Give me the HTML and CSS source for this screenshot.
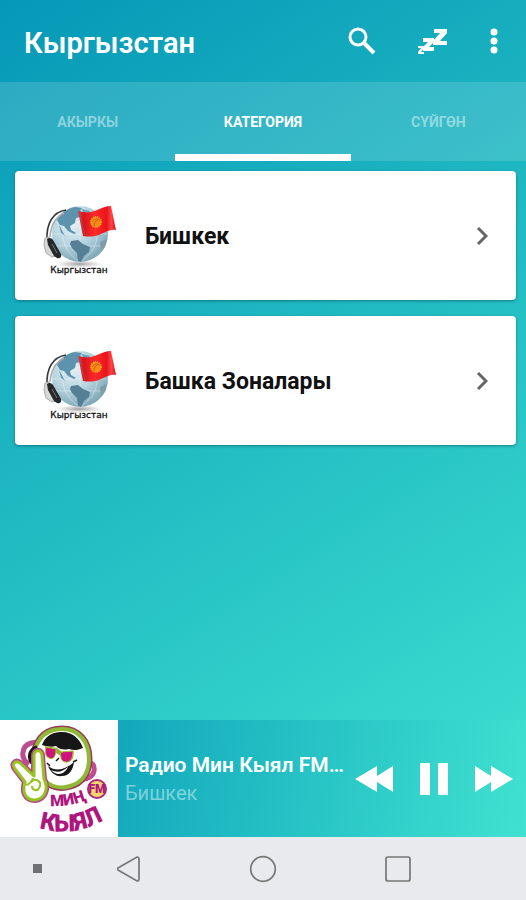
FILE: index.html
```html
<!DOCTYPE html>
<html lang="ky">
<head>
    <meta charset="UTF-8">
    <meta name="viewport" content="width=device-width, initial-scale=1.0">
    <title>Кыргызстан</title>
    <link rel="stylesheet" href="styles.css">
</head>
<body>
    <svg class="defs" width="0" height="0" aria-hidden="true">
        <defs>
            <radialGradient id="sea" cx="38%" cy="32%" r="70%">
                <stop offset="0" stop-color="#e4f1f5"/>
                <stop offset="0.55" stop-color="#b5d3de"/>
                <stop offset="1" stop-color="#7fa7b8"/>
            </radialGradient>
            <radialGradient id="shade">
                <stop offset="0" stop-color="#777" stop-opacity="0.7"/>
                <stop offset="1" stop-color="#999" stop-opacity="0"/>
            </radialGradient>
            <linearGradient id="red">
                <stop offset="0" stop-color="#f2353a"/>
                <stop offset="0.15" stop-color="#d8141d"/>
                <stop offset="0.45" stop-color="#ff2a2a"/>
                <stop offset="0.75" stop-color="#e9131c"/>
                <stop offset="0.88" stop-color="#ff4545"/>
                <stop offset="1" stop-color="#d90f1a"/>
            </linearGradient>
            <symbol id="globe" viewBox="0 0 90 90">
                <ellipse cx="44" cy="73" rx="24" ry="4" fill="url(#shade)"/>
                <circle cx="45" cy="43" r="28" fill="url(#sea)"/>
                <g transform="translate(2 4)">
                    <path d="M15 39h56M18 27h50M18 51h50M43 11v56M43 11c-23 14-23 42 0 56M43 11c23 14 23 42 0 56" fill="none" stroke="#fff" stroke-width="0.6" opacity="0.6"/>
                    <path d="M23 20c4-4 9-7 15-8l7 1-2 3 4 2-4 4-4 1-1 5-5 3 1 4 5 3-2 1-6-3-4-5-4-1-3-5z" fill="#5e93ad"/>
                    <path d="M45 14l8 2-2 5-5-3zM22 30l3 5 3 6-4-3z" fill="#6d9fb6"/>
                    <path d="M34 46l7-1 5 4 7 3-1 5-5 4-3 6-3-1-1-8-5-5-2-4z" fill="#557f94"/>
                    <path d="M63 47l7-3-2 8-4 4z" fill="#7f9da9"/>
                    <path d="M10 46c-1-18 6-29 19-31" fill="none" stroke="#33383b" stroke-width="1.6"/>
                    <path d="M13 42c1-13 6-20 14-24" fill="none" stroke="#aaa" stroke-width="1.5"/>
                    <path d="M8 43l4-1 8 19-5 1-6-4-2-8z" fill="#d7d7d7" stroke="#aaa"/>
                    <path d="M10 44c2-2 5-1 6 1l8 14c1 3-1 5-4 4l-3-2-6-11z" fill="#26282a"/>
                    <path d="M15 49l5 9" stroke="#777"/>
                </g>
                <path d="M43 20c7 2 13 2 19-1 5-2 9-4 14-4l5 24c-6-1-10 2-15 4-6 3-12 3-18 2z" fill="url(#red)"/>
                <path d="M44 20l6 25" stroke="#9b5156"/>
                <circle cx="61" cy="31" r="5" fill="#f78c12" stroke="#ffad20" stroke-width="2" stroke-dasharray="1 1"/>
                <path d="M57 31c3-4 6-4 8-1M59 35c0-4 2-6 5-7" fill="none" stroke="#d85c10"/>
                <text x="44" y="82" class="globe-label">Кыргызстан</text>
            </symbol>
        </defs>
    </svg>

    <div class="app">
        <header class="toolbar">
            <h1 class="title">Кыргызстан</h1>
            <button class="icon-button search" aria-label="Издөө">
                <svg width="28" height="28" viewBox="0 0 28 28"><circle cx="10" cy="10" r="8" fill="none" stroke="#fff" stroke-width="3"/><path d="M16 16l10 10" stroke="#fff" stroke-width="4"/></svg>
            </button>
            <button class="icon-button sleep" aria-label="Таймер">
                <svg width="30" height="26" viewBox="0 0 30 26" fill="#fff"><path d="M16 1h13v4l-7 8h7v4H15v-4l7-8h-6zM5 10h11v4l-5 5h5v4H5v-4l5-5H5zM0 18h6v2l-3 4h3v2H0v-2l3-4H0z"/></svg>
            </button>
            <button class="icon-button more" aria-label="Меню">
                <svg width="8" height="26" viewBox="0 0 8 26" fill="#fff"><circle cx="4" cy="4" r="3.5"/><circle cx="4" cy="13" r="3.5"/><circle cx="4" cy="22" r="3.5"/></svg>
            </button>
        </header>

        <nav class="tabs">
            <button class="tab">АКЫРКЫ</button>
            <button class="tab active">КАТЕГОРИЯ</button>
            <button class="tab">СҮЙГӨН</button>
        </nav>

        <main class="list">
            <button class="card">
                <svg class="card-image" viewBox="0 0 90 90"><use href="#globe"/></svg>
                <span class="card-title">Бишкек</span>
                <svg class="chevron" width="12" height="18" viewBox="0 0 12 18"><path d="M2 1l8 8-8 8" fill="none" stroke="#666" stroke-width="3"/></svg>
            </button>
            <button class="card">
                <svg class="card-image" viewBox="0 0 90 90"><use href="#globe"/></svg>
                <span class="card-title">Башка Зоналары</span>
                <svg class="chevron" width="12" height="18" viewBox="0 0 12 18"><path d="M2 1l8 8-8 8" fill="none" stroke="#666" stroke-width="3"/></svg>
            </button>
        </main>

        <section class="player">
            <svg class="cover" viewBox="0 0 118 117" role="img" aria-label="Мин Кыял FM">
                <!-- headphones and head outline -->
                <path d="M29 44c-9-5-8-18 2-21 7-2 10 4 8 10M81 59c7 1 12-3 13-8 1-6-2-9-6-8" fill="none" stroke="#bd4c91" stroke-width="5"/>
                <path d="M34 33C38 16 48 9 62 9c17 0 27 13 27 30 0 14-7 24-19 27-12 4-24-1-30-11z" fill="#fff" stroke="#983d5b" stroke-width="7"/>
                <path d="M34 33C38 16 48 9 62 9c17 0 27 13 27 30 0 14-7 24-19 27-12 4-24-1-30-11z" fill="#fff" stroke="#8fba35" stroke-width="4"/>
                <path d="M32 43c-4-7-2-13 5-16" fill="none" stroke="#171717" stroke-width="4"/>
                <path d="M42 25c3-8 8-12 18-13 11-1 20 6 23 16-5 2-9 3-14 1-5 1-9 1-13-3-4 1-8 1-14-1z" fill="#171717"/>
                <path d="M45 26l12 2 5 4 12-1-1 7c-3 6-11 5-12-2l-5-3c-3 7-11 6-10-1z" fill="#8cb82a"/>
                <path d="M46 27l10 2c0 8-3 11-7 9-4-2-4-6-3-11zM61 32l12-1c0 8-3 12-8 11-4-1-5-5-4-10z" fill="#d0127c" stroke="#a4c534"/>
                <path d="M48 46c8 6 17 4 26-4-1 8-5 14-12 14-6 1-11-3-14-10z" fill="#171717"/>
                <path d="M51 50c6 3 11 2 17-3-3 7-11 10-17 3z" fill="#fff"/>
                <path d="M73 42l4-2M47 43l3 3M59 38l-3 3" stroke="#171717" stroke-width="1.5"/>
                <!-- victory hand -->
                <path d="M25 62L15 49c-4-6 1-9 5-6l14 13V36c0-7 8-7 8 0l2 23c5 9 1 20-9 21-10 0-13-8-10-18z" fill="#fff" stroke="#b6478d" stroke-width="6" stroke-linejoin="round"/>
                <path d="M25 62L15 49c-4-6 1-9 5-6l14 13V36c0-7 8-7 8 0l2 23c5 9 1 20-9 21-10 0-13-8-10-18z" fill="#fff" stroke="#95c41e" stroke-width="3" stroke-linejoin="round"/>
                <path d="M31 62c5-5 12 0 8 6-2 4-7 2-7-2M26 65c4-1 6-4 7-7" fill="none" stroke="#95c41e" stroke-width="2"/>
                <circle cx="97" cy="69" r="9" fill="#f4d76a" stroke="#a72a7d" stroke-width="2"/>
                <path id="arc-small" d="M50 86q20 1 37-6" fill="none"/>
                <path id="arc-big" d="M39 108Q77 119 110 96" fill="none"/>
                <text x="97" y="73" class="cover-fm">FM</text>
                <text class="cover-small"><textPath href="#arc-small">МИҢ</textPath></text>
                <text class="cover-big"><textPath href="#arc-big">КЫЯЛ</textPath></text>
            </svg>
            <div class="track">
                <div class="track-title">Радио Мин Кыял FM…</div>
                <div class="track-place">Бишкек</div>
            </div>
            <div class="controls">
                <button class="icon-button" aria-label="Мурунку">
                    <svg width="40" height="28" viewBox="0 0 40 28" fill="#fff"><path d="M1 14L23 1v10L39 1v26L23 17v10z"/></svg>
                </button>
                <button class="icon-button" aria-label="Тыныгуу">
                    <svg width="28" height="32" viewBox="0 0 28 32" fill="#fff"><path d="M0 0h10v32H0zM18 0h10v32H18z"/></svg>
                </button>
                <button class="icon-button" aria-label="Кийинки">
                    <svg width="40" height="28" viewBox="0 0 40 28" fill="#fff"><path d="M39 14L17 1v10L1 1v26l16-10v10z"/></svg>
                </button>
            </div>
        </section>
    </div>

    <footer class="system-bar">
        <span class="dot"></span>
        <div class="system-buttons">
            <button class="icon-button" aria-label="Артка">
                <svg width="28" height="28" viewBox="0 0 28 28"><path d="M23 2c1 0 2 1 2 2v20c0 1-1 2-2 2L4 15c-1-1-1-1 0-2z" fill="none" stroke="#777" stroke-width="1.7"/></svg>
            </button>
            <button class="icon-button" aria-label="Башкы бет">
                <svg width="28" height="28" viewBox="0 0 28 28"><circle cx="14" cy="14" r="12.3" fill="none" stroke="#777" stroke-width="1.7"/></svg>
            </button>
            <button class="icon-button" aria-label="Колдонмолор">
                <svg width="28" height="28" viewBox="0 0 28 28"><rect x="2" y="2" width="24" height="24" rx="2" fill="none" stroke="#777" stroke-width="1.7"/></svg>
            </button>
        </div>
    </footer>
</body>
</html>
```
FILE: styles.css
```css
*{box-sizing:border-box}
body{font-family:Roboto,"Noto Sans",sans-serif;margin:0;min-height:100vh;display:flex;flex-direction:column;background-color:#e9eaee}
button{font-family:inherit;border:none;background:none;padding:0;cursor:pointer}
.defs{position:absolute}
.app{flex:1;display:flex;flex-direction:column;background:linear-gradient(148deg,#0698b8 0%,#22bdc3 50%,#40e1d1 100%)}
.toolbar{display:flex;align-items:center;height:82px;padding:0 28px 0 24px}
.title{flex:1;margin:0;padding-top:4px;font-size:29px;font-weight:600;line-height:36px;color:#fff}
.icon-button{display:flex;align-items:center;justify-content:center}
.search{margin-right:42px}
.sleep{margin-right:42px}
.tabs{display:grid;grid-template-columns:repeat(3,1fr);height:79px;background-color:rgba(255,255,255,0.14)}
.tab{border-top:7px solid transparent;border-bottom:7px solid transparent;font-size:14px;font-weight:700;color:rgba(255,255,255,0.45)}
.active{border-bottom-color:#fff;color:#fff}
.list{flex:1;display:flex;flex-direction:column;gap:16px;padding:10px 10px 16px 15px}
.card{display:flex;align-items:center;height:129px;padding:0 28px 0 20px;background-color:#fff;border-radius:4px;box-shadow:0 1px 3px rgba(0,60,70,0.5);text-align:left}
.card-image{width:90px;height:90px;margin-right:20px}
.card-title{flex:1;padding-top:2px;font-size:23px;font-weight:700;line-height:32px;color:#111}
.globe-label{font-family:"DejaVu Sans",sans-serif;font-size:9px;fill:#111;stroke:#111;stroke-width:0.3px;text-anchor:middle}
.player{display:flex;align-items:center;height:117px;background:linear-gradient(102deg,#0698b8 0%,#22bdc3 50%,#40e1d1 100%)}
.cover{flex:none;width:118px;height:117px;background-color:#fff}
.cover text{font-family:Roboto,sans-serif;font-weight:900;fill:#ae167d}
.cover .cover-small{font-size:16px}
.cover .cover-big{font-size:24px}
.cover .cover-fm{font-size:12px;text-anchor:middle}
.track{flex:1;min-width:0;padding-left:7px}
.track-title{font-size:21px;font-weight:600;line-height:28px;color:#fff;white-space:nowrap;overflow:hidden;text-overflow:ellipsis}
.track-place{font-size:20px;line-height:28px;color:rgba(255,255,255,0.45)}
.controls{display:flex;align-items:center;gap:26px;padding:0 12px 0 6px}
.system-bar{display:flex;align-items:center;gap:72px;height:63px;padding:0 114px 0 33px}
.system-buttons{flex:1;display:flex;align-items:center;justify-content:space-between}
.dot{width:9px;height:9px;background-color:#707176}
```
